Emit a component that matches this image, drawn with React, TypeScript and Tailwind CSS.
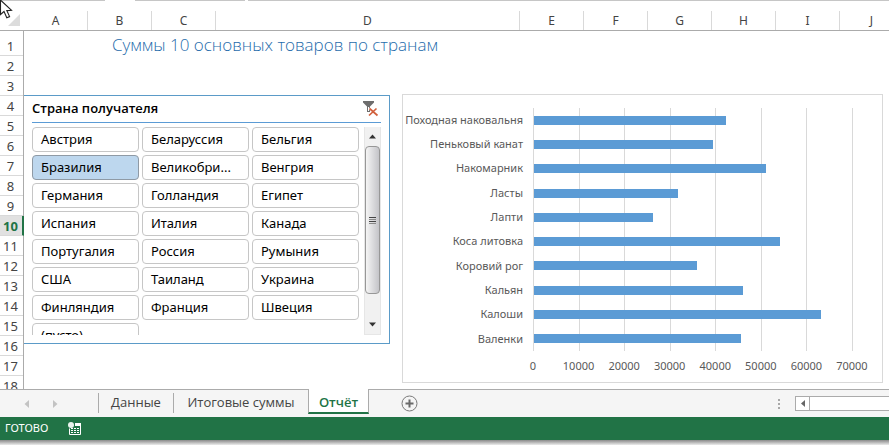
import { useState } from "react";

const columns = [
  { name: "A", width: "w-16" },
  { name: "B", width: "w-16" },
  { name: "C", width: "w-16" },
  { name: "D", width: "w-[304px]" },
  { name: "E", width: "w-16" },
  { name: "F", width: "w-16" },
  { name: "G", width: "w-16" },
  { name: "H", width: "w-16" },
  { name: "I", width: "w-16" },
  { name: "J", width: "w-16" },
];

const rows = Array.from({ length: 18 }, (_, i) => i + 1);
const activeRow = 10;

const countries = [
  "Австрия",
  "Беларуссия",
  "Бельгия",
  "Бразилия",
  "Великобритания",
  "Венгрия",
  "Германия",
  "Голландия",
  "Египет",
  "Испания",
  "Италия",
  "Канада",
  "Португалия",
  "Россия",
  "Румыния",
  "США",
  "Таиланд",
  "Украина",
  "Финляндия",
  "Франция",
  "Швеция",
  "(пусто)",
];

const products = [
  { name: "Походная наковальня", total: 42200 },
  { name: "Пеньковый канат", total: 39300 },
  { name: "Накомарник", total: 51100 },
  { name: "Ласты", total: 31600 },
  { name: "Лапти", total: 26300 },
  { name: "Коса литовка", total: 54200 },
  { name: "Коровий рог", total: 35800 },
  { name: "Кальян", total: 46100 },
  { name: "Калоши", total: 63200 },
  { name: "Валенки", total: 45600 },
];

const axisMax = 70000;
const ticks = [0, 10000, 20000, 30000, 40000, 50000, 60000, 70000];

const tabs = [
  { name: "Данные", width: "w-[75px]" },
  { name: "Итоговые суммы", width: "w-[135px]" },
  { name: "Отчёт", width: "w-[61px]" },
];

function Cursor() {
  return (
    <svg className="absolute left-0 top-0" width="14" height="20" viewBox="0 0 14 20">
      <path
        d="M0.5 0 L0.5 14.5 L4 11.5 L6.8 17.8 L9.6 16.6 L6.8 10.6 L11.5 10.3 Z"
        fill="#fff"
        stroke="#222"
        strokeWidth="1.1"
      />
    </svg>
  );
}

function ColumnHeader() {
  return (
    <div className="flex h-5 shrink-0 overflow-hidden border-b border-[#ababab] bg-white">
      <div className="flex w-6 shrink-0 items-end justify-end pb-1 pr-1">
        <svg width="12" height="12" viewBox="0 0 12 12">
          <path d="M12 0V12H0Z" fill="#dcdcdc" />
        </svg>
      </div>
      {columns.map((col) => (
        <div
          key={col.name}
          className={`${col.width} shrink-0 border-r border-[#d9d9d9] text-center text-xs leading-5 text-[#444]`}
        >
          {col.name}
        </div>
      ))}
    </div>
  );
}

function RowHeader() {
  return (
    <div className="w-6 shrink-0 border-r border-[#ababab] text-[13px] leading-[18px] text-[#444]">
      {rows.map((row) => (
        <div
          key={row}
          className={`flex items-end justify-center border-b border-[#d9d9d9]
            ${row === 1 ? "h-[25px]" : "h-5"}
            ${row === activeRow ? "-mr-px border-r-2 border-r-[#217346] bg-[#e1e1e1] pr-px font-bold text-[#217346]" : "pr-0.5"}`}
        >
          {row}
        </div>
      ))}
    </div>
  );
}

// Иконка "очистить фильтр"
function ClearFilterIcon() {
  return (
    <svg width="16" height="16" viewBox="0 0 16 16">
      <path d="M0 0H11V1.5L7 5.5V11H4V5.5L0 1.5Z" fill="#6d6d6d" />
      <path d="M5.5 6V10" stroke="#fff" strokeWidth="1" />
      <path d="M6.5 7L14.5 14.5M14 7L6 14.5" stroke="#fff" strokeWidth="3" />
      <path d="M6.5 7.5L14.5 14.5M13.5 7.5L6 14.5" stroke="#d1603d" strokeWidth="1.7" />
    </svg>
  );
}

function Slicer() {
  const [selected, setSelected] = useState("Бразилия");

  return (
    <section className="flex h-[249px] w-[366px] shrink-0 flex-col border border-l-0 border-[#5b9bc8] bg-white px-2">
      <header className="flex h-[27px] shrink-0 items-center justify-between border-b border-[#5b9bd5] pr-0.5">
        <h2 className="font-['Open_Sans',sans-serif] text-[13px] font-semibold text-black">Страна получателя</h2>
        <button type="button" aria-label="Очистить фильтр">
          <ClearFilterIcon />
        </button>
      </header>
      <div className="mt-1 flex h-[208px] justify-between overflow-hidden">
        <div className="grid w-[327px] auto-rows-[25px] grid-cols-3 gap-[3px]">
          {countries.map((country) => (
            <button
              key={country}
              type="button"
              aria-pressed={country === selected}
              onClick={() => setSelected(country)}
              className={`truncate rounded border px-2 text-left text-[13px] leading-[23px] text-black
                ${country === selected ? "border-[#8f9aa5] bg-[#bdd7ee]" : "border-[#c6c6c6] bg-white"}`}
            >
              {country.length > 12 ? `${country.slice(0, 9)}...` : country}
            </button>
          ))}
        </div>
        <div className="flex w-[17px] flex-col items-center border-x border-b border-[#e6e6e6] bg-[#f1f1f1]">
          <svg className="my-1.5 shrink-0" width="7" height="7" viewBox="0 0 7 7">
            <path d="M0 5.5L3.5 1.5L7 5.5Z" fill="#333" />
          </svg>
          <div className="flex h-[148px] w-[15px] shrink-0 flex-col items-center justify-center gap-px rounded-sm border border-[#979797] bg-linear-to-r from-[#f5f5f5] to-[#c4c4c8]">
            <span className="h-px w-[7px] bg-[#444]" />
            <span className="h-px w-[7px] bg-[#888]" />
            <span className="h-px w-[7px] bg-[#444]" />
            <span className="h-px w-[7px] bg-[#888]" />
          </div>
          <svg className="mb-1.5 mt-auto shrink-0" width="7" height="7" viewBox="0 0 7 7">
            <path d="M0 1.5L3.5 5.5L7 1.5Z" fill="#333" />
          </svg>
        </div>
      </div>
    </section>
  );
}

function Chart() {
  return (
    <section className="-mt-px flex h-[289px] min-w-0 flex-1 border border-[#d9d9d9] bg-white pl-1 pr-[30px] pt-[13px] text-[11px] text-[#595959]">
      <div className="flex h-[243px] w-[116px] shrink-0 flex-col">
        {products.map((p) => (
          <div key={p.name} className="flex flex-1 items-center justify-end whitespace-nowrap">
            {p.name}
          </div>
        ))}
      </div>
      <div className="ml-2.5 flex-1">
        <div className="relative flex h-[243px] flex-col">
          {ticks.map((tick) => (
            <span
              key={tick}
              className="absolute inset-y-0 w-px bg-[#d9d9d9]"
              style={{ left: `${(tick / axisMax) * 100}%` }}
            />
          ))}
          {products.map((p) => (
            <div key={p.name} className="relative flex flex-1 items-center pl-px">
              <div className="h-[9px] bg-[#5b9bd5]" style={{ width: `${(p.total / axisMax) * 100}%` }} />
            </div>
          ))}
        </div>
        <div className="mt-[5px] flex justify-between">
          {ticks.map((tick) => (
            <span key={tick} className="flex w-0 justify-center leading-5">
              {tick}
            </span>
          ))}
        </div>
      </div>
    </section>
  );
}

function SheetTabs() {
  const [active, setActive] = useState("Отчёт");

  return (
    <nav className="flex h-7 shrink-0 font-['Open_Sans',sans-serif] text-[13px] text-[#444]">
      <div className="flex w-[98px] shrink-0 items-center gap-6 border-t border-[#ababab] bg-[#f5f5f5] pl-6">
        <button type="button" aria-label="Предыдущий лист">
          <svg width="5" height="8" viewBox="0 0 5 8">
            <path d="M5 0V8L0.5 4Z" fill="#c3c3c3" />
          </svg>
        </button>
        <button type="button" aria-label="Следующий лист">
          <svg width="5" height="8" viewBox="0 0 5 8">
            <path d="M0 0V8L4.5 4Z" fill="#c3c3c3" />
          </svg>
        </button>
      </div>
      {tabs.map((tab) => (
        <div
          key={tab.name}
          className={`${tab.width} shrink-0 bg-[#f5f5f5] ${tab.name === active ? "" : "border-t border-[#ababab]"}`}
        >
          <button
            type="button"
            onClick={() => setActive(tab.name)}
            className={`w-full whitespace-nowrap ${
              tab.name === active
                ? "h-[25px] border-x border-b-2 border-x-[#ababab] border-b-[#217346] bg-white pt-1 font-semibold text-[#217346]"
                : "mt-[3px] h-5 border-l border-[#ababab]"
            }`}
          >
            {tab.name}
          </button>
        </div>
      ))}
      <div className="flex min-w-0 flex-1 items-center border-t border-[#ababab] bg-[#f5f5f5] pl-8">
        <button type="button" aria-label="Новый лист">
          <svg width="17" height="17" viewBox="0 0 17 17" fill="none">
            <circle cx="8.5" cy="8.5" r="7.5" stroke="#7a7a7a" />
            <path d="M8.5 4.5V12.5M4.5 8.5H12.5" stroke="#6a6a6a" strokeWidth="2" />
          </svg>
        </button>
        <svg className="ml-auto" width="2" height="10" viewBox="0 0 2 10" fill="#a8a8a8">
          <path d="M0 0H2V2H0ZM0 4H2V6H0ZM0 8H2V10H0Z" />
        </svg>
        <div className="ml-[15px] flex h-[15px] w-[94px] border border-r-0 border-[#ababab] bg-white">
          <button
            type="button"
            aria-label="Прокрутить влево"
            className="flex w-3.5 items-center justify-center border-r border-[#ababab]"
          >
            <svg width="4" height="7" viewBox="0 0 4 7">
              <path d="M4 0V7L0 3.5Z" fill="#666" />
            </svg>
          </button>
        </div>
      </div>
    </nav>
  );
}

function StatusBar() {
  return (
    <footer className="flex h-[23px] shrink-0 items-center gap-5 bg-[#217346] pl-[5px] text-[11px] text-white">
      <span>ГОТОВО</span>
      <svg width="14" height="14" viewBox="0 0 14 14">
        <path d="M7 1H13V4H7Z" fill="#fff" />
        <path d="M1.5 6.5V12.5H12.5V4" fill="none" stroke="#fff" />
        <path d="M3 6.5H12M3 8.5H12M3 10.5H12" stroke="#fff" strokeDasharray="2 1" />
        <circle cx="3" cy="3" r="3" fill="#e8f3ec" />
      </svg>
    </footer>
  );
}

export default function App() {
  return (
    <div className="relative flex flex-col overflow-hidden bg-white font-['Noto_Sans','Open_Sans',sans-serif]">
      {/* нижний край строки формул */}
      <div className="flex h-[11px] shrink-0 items-start">
        <span className="h-px w-[105px] bg-[#c6c6c6]" />
        <span className="ml-[30px] h-px w-[110px] bg-[#c6c6c6]" />
        <span className="ml-[3px] h-px flex-1 bg-[#c6c6c6]" />
      </div>
      <ColumnHeader />
      <main className="flex h-[358px] shrink-0 overflow-hidden">
        <RowHeader />
        <div className="min-w-0 flex-1">
          <h1 className="h-16 pl-[88px] font-['Open_Sans',sans-serif] text-[17px] font-light leading-7 text-[#1f6cab]">
            Суммы 10 основных товаров по странам
          </h1>
          <div className="flex items-start gap-3 pr-1.5">
            <Slicer />
            <Chart />
          </div>
        </div>
      </main>
      <SheetTabs />
      <StatusBar />
      <div className="h-[5px] bg-linear-to-b from-[#8a8a8a] to-[#ececec]" />
      <Cursor />
    </div>
  );
}
